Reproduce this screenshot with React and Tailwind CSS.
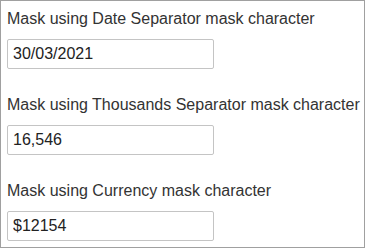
const FIELDS = [
  { label: 'Mask using Date Separator mask character', value: '30/03/2021' },
  { label: 'Mask using Thousands Separator mask character', value: '16,546' },
  { label: 'Mask using Currency mask character', value: '$12154' },
]

export default function App() {
  return (
    <div className="w-[365px] h-[248px] border border-[#a0a0a0] bg-white pt-[9px] px-[6px] font-['Liberation_Sans',Arial,sans-serif] text-[#333333]">
      {FIELDS.map(f => (
        <div key={f.label} className="mb-[27px]">
          <label className="block text-[16px] leading-[18px] whitespace-nowrap mb-[11px]">{f.label}</label>
          <input
            type="text"
            defaultValue={f.value}
            className="block w-[207px] h-[30px] border border-[#c4c4c4] rounded-[2px] px-[5px] text-[16px] text-[#222222] outline-none"
          />
        </div>
      ))}
    </div>
  )
}
